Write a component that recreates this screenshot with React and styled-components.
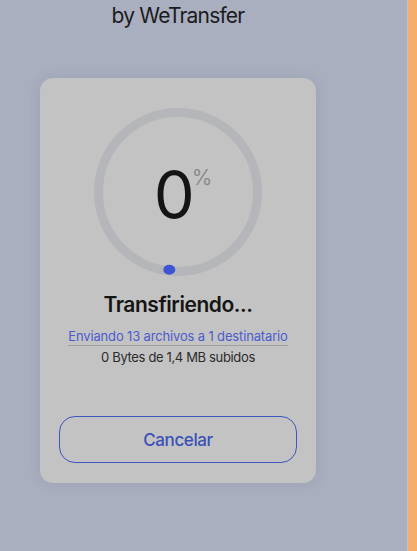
import React from "react";
import styled, { createGlobalStyle } from "styled-components";

const Global = createGlobalStyle`
  html, body { margin: 0; padding: 0; height: 100%; }
  body { background: #a9afbf; font-family: Inter, "Noto Sans", sans-serif; color: #161616; }
  #root { height: 100%; }
`;

const Page = styled.div`
  display: flex;
  height: 551px;
  overflow: hidden;
`;

const Main = styled.main`
  flex: 1;
  padding-left: 40px;
  border-right: 1px solid #bfc3cd;
`;

const Side = styled.aside`
  width: 9px;
  background: #f7ae6a;
`;

const Column = styled.div`
  width: 276px;
  display: flex;
  flex-direction: column;
  align-items: center;
`;

const Brand = styled.div`
  font-size: 21px;
  line-height: 24px;
  margin-top: 4px;
  letter-spacing: -0.8px;
  color: #1b1b1d;
`;

const Card = styled.section`
  margin-top: 50px;
  width: 276px;
  height: 405px;
  box-sizing: border-box;
  background: #c3c3c3;
  border-radius: 13px;
  box-shadow: 0 0 14px rgba(60, 64, 80, 0.12);
  padding: 30px 19px 20px;
  display: flex;
  flex-direction: column;
  align-items: center;
`;

const Dial = styled.div`
  display: grid;
  width: 168px;
  height: 168px;
  & > * { grid-area: 1 / 1; }
`;

const Ring = styled.svg`
  width: 168px;
  height: 168px;
`;

const Value = styled.div`
  display: flex;
  align-items: flex-start;
  justify-content: center;
  padding-top: 52px;
  padding-left: 10px;
`;

const Number = styled.span`
  font-size: 65px;
  line-height: 70px;
  font-weight: 400;
  letter-spacing: -2px;
  color: #141414;
`;

const Percent = styled.span`
  font-size: 21px;
  line-height: 24px;
  color: #8b8b8b;
  margin-top: 6px;
  margin-left: -1px;
`;

const Title = styled.h1`
  margin: 16px 0 0;
  font-size: 21px;
  line-height: 25px;
  font-weight: 600;
  letter-spacing: -0.45px;
  color: #151515;
`;

const Link = styled.a`
  margin-top: 11px;
  font-size: 13px;
  line-height: 16px;
  color: #4d5bd0;
  text-decoration: none;
  letter-spacing: -0.15px;
  padding-bottom: 1px;
  border-bottom: 1px solid rgba(0, 0, 0, 0.18);
  cursor: pointer;
`;

const Meta = styled.div`
  margin-top: 3px;
  font-size: 13px;
  line-height: 16px;
  letter-spacing: -0.35px;
  color: #2b2b2b;
`;

const Button = styled.button`
  margin-top: auto;
  width: 238px;
  height: 47px;
  border: 1px solid #3d57c0;
  border-radius: 16px;
  background: transparent;
  font-family: inherit;
  font-size: 17px;
  font-weight: 500;
  letter-spacing: -0.4px;
  color: #3a50b8;
  cursor: pointer;
`;

export default function App() {
  return (
    <>
      <Global />
      <Page>
        <Main>
          <Column>
            <Brand>by WeTransfer</Brand>
            <Card>
              <Dial>
                <Ring viewBox="0 0 168 168">
                  <circle cx="84" cy="84" r="79.5" fill="none" stroke="#b5b6b9" strokeWidth="9" />
                  <ellipse cx="75.3" cy="161.7" rx="6" ry="5" fill="#3d55d2" />
                </Ring>
                <Value>
                  <Number>0</Number>
                  <Percent>%</Percent>
                </Value>
              </Dial>
              <Title>Transfiriendo...</Title>
              <Link>Enviando 13 archivos a 1 destinatario</Link>
              <Meta>0 Bytes de 1,4 MB subidos</Meta>
              <Button>Cancelar</Button>
            </Card>
          </Column>
        </Main>
        <Side />
      </Page>
    </>
  );
}
